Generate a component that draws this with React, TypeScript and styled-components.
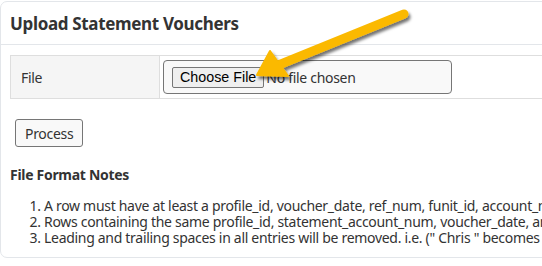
import styled, { createGlobalStyle } from "styled-components";

const Global = createGlobalStyle`
  html, body {
    margin: 0;
    padding: 0;
    background: #ffffff;
    overflow: hidden;
  }
  body {
    font-family: "Noto Sans", "Open Sans", sans-serif;
    letter-spacing: -0.3px;
    color: #333333;
  }
`;

const Page = styled.div`
  position: relative;
  width: 542px;
  height: 266px;
  overflow: hidden;
`;

const Card = styled.div`
  width: 760px;
  margin-top: 1px;
  border: 1px solid #e3e6ea;
  border-radius: 7px;
  background: #ffffff;
`;

const Header = styled.div`
  height: 42px;
  padding: 0 9px;
  display: flex;
  align-items: center;
  border-bottom: 1px solid #e3e6ea;
`;

const Title = styled.h3`
  margin: 0;
  font-size: 17px;
  font-weight: 700;
  letter-spacing: -0.34px;
  color: #333333;
`;

const Body = styled.div`
  padding: 10px 9px 11px;
`;

const FormTable = styled.table`
  border-collapse: collapse;
  table-layout: fixed;
  width: 100%;
`;

const LabelCell = styled.td`
  width: 128px;
  height: 41px;
  padding: 0 10px;
  background: #f5f5f5;
  border: 1px solid #dedede;
  font-size: 14px;
  color: #333333;
`;

const InputCell = styled.td`
  padding: 4px 3px;
  border: 1px solid #dedede;
`;

const FileBox = styled.label`
  display: flex;
  align-items: center;
  box-sizing: border-box;
  width: 289px;
  height: 34px;
  padding: 0 8px;
  border: 1px solid #767676;
  border-radius: 4px;
  background: #f9f9f9;
  font-size: 14px;
  color: #333333;
  cursor: pointer;

  input {
    display: none;
  }
`;

const ChooseButton = styled.span`
  display: inline-flex;
  align-items: center;
  box-sizing: border-box;
  height: 21px;
  padding: 0 7px;
  margin-right: 2px;
  border: 1px solid #767676;
  border-radius: 2px;
  background: #efefef;
  font-family: "Liberation Sans", Arial, sans-serif;
  font-size: 14.3px;
  letter-spacing: 0;
  color: #000000;
`;

const NoFile = styled.span`
  white-space: nowrap;
`;

const ProcessButton = styled.button`
  margin: 20px 0 0 5px;
  height: 28px;
  padding: 0 9px;
  border: 1px solid #767676;
  border-radius: 3px;
  background: #f9f9f9;
  font-family: "Noto Sans", sans-serif;
  font-size: 14px;
  letter-spacing: -0.3px;
  color: #333333;
`;

const NotesTitle = styled.h4`
  margin: 18px 0 14px;
  font-size: 14px;
  font-weight: 700;
  color: #333333;
`;

const Notes = styled.ol`
  margin: 0;
  padding-left: 34px;
  font-size: 14px;
  line-height: 16px;
  white-space: nowrap;
  color: #333333;
`;

const Arrow = styled.svg`
  position: absolute;
  left: 0;
  top: 0;
  pointer-events: none;
`;

export default function App() {
  return (
    <Page>
      <Global />
      <Card>
        <Header>
          <Title>Upload Statement Vouchers</Title>
        </Header>
        <Body>
          <FormTable>
            <tbody>
              <tr>
                <LabelCell>File</LabelCell>
                <InputCell>
                  <FileBox>
                    <input type="file" />
                    <ChooseButton>Choose File</ChooseButton>
                    <NoFile>No file chosen</NoFile>
                  </FileBox>
                </InputCell>
              </tr>
            </tbody>
          </FormTable>
          <ProcessButton>Process</ProcessButton>
          <NotesTitle>File Format Notes</NotesTitle>
          <Notes>
            <li>A row must have at least a profile_id, voucher_date, ref_num, funit_id, account_num, amount</li>
            <li>Rows containing the same profile_id, statement_account_num, voucher_date, and ref_num are grouped</li>
            <li>Leading and trailing spaces in all entries will be removed. i.e. (" Chris " becomes "Chris")</li>
          </Notes>
        </Body>
      </Card>
      <Arrow width="542" height="266" viewBox="0 0 542 266">
        <defs>
          <filter id="sh" x="-20%" y="-20%" width="140%" height="140%">
            <feDropShadow dx="2" dy="3" stdDeviation="1.5" floodColor="#000" floodOpacity="0.55" />
          </filter>
        </defs>
        <g filter="url(#sh)" fill="#fbb900" stroke="#fbb900" strokeLinecap="round" strokeLinejoin="round">
          <line x1="404" y1="14" x2="276" y2="66" strokeWidth="9" />
          <polygon points="257,75 270,51 288,76" strokeWidth="2" />
        </g>
      </Arrow>
    </Page>
  );
}
